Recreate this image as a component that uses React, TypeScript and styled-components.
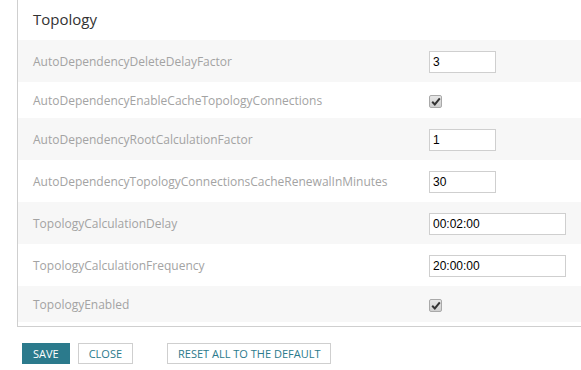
import React from "react";
import styled, { createGlobalStyle } from "styled-components";

const Global = createGlobalStyle`
  html, body { margin: 0; padding: 0; background: #fff; }
  body { font-family: "Open Sans", "Noto Sans", sans-serif; }
  * { box-sizing: border-box; }
`;

const Page = styled.div`
  width: 581px;
  height: 370px;
  overflow: hidden;
  background: #fff;
`;

const Panel = styled.section`
  margin-left: 17px;
  border-left: 1px solid #cfcfcf;
  border-bottom: 1px solid #cfcfcf;
  padding-bottom: 4px;
`;

const Title = styled.h2`
  margin: 0;
  height: 40px;
  padding: 9px 0 0 15px;
  font-size: 15px;
  font-weight: 400;
  color: #333;
  line-height: 20px;
`;

const Row = styled.div<{ $shaded: boolean; $h: number }>`
  display: grid;
  grid-template-columns: 396px 1fr;
  align-items: center;
  height: ${(p) => p.$h}px;
  padding-left: 15px;
  background: ${(p) => (p.$shaded ? "#f7f7f7" : "#fff")};
`;

const Label = styled.span`
  font-size: 12px;
  color: #a3a3a3;
  white-space: nowrap;
`;

const TextInput = styled.input<{ $wide: boolean }>`
  width: ${(p) => (p.$wide ? 137 : 67)}px;
  height: 22px;
  border: 1px solid #cfcfcf;
  background: #fff;
  padding: 0 3px;
  font-family: "Liberation Sans", Arial, sans-serif;
  font-size: 12px;
  color: #000;
  outline: none;
  margin: 0;
`;

const CheckBox = styled.span`
  display: inline-flex;
  align-items: center;
  justify-content: center;
  width: 13px;
  height: 13px;
  border: 1px solid #a9a9a9;
  border-radius: 2px;
  background: linear-gradient(#e6e6e6, #cfcfcf);
  margin-top: -2px;
`;

const Actions = styled.div`
  display: flex;
  align-items: center;
  padding: 16px 0 0 22px;
`;

const Button = styled.button<{ $primary?: boolean; $gapLeft: number }>`
  height: 21px;
  margin: 0 0 0 ${(p) => p.$gapLeft}px;
  padding: 0 10px;
  font-family: "Open Sans", "Noto Sans", sans-serif;
  font-size: 11px;
  line-height: 19px;
  text-transform: uppercase;
  cursor: pointer;
  border: 1px solid ${(p) => (p.$primary ? "#2b7a8c" : "#cfcfcf")};
  background: ${(p) => (p.$primary ? "#2b7a8c" : "#fff")};
  color: ${(p) => (p.$primary ? "#fff" : "#2b7a8c")};
`;

type Setting =
  | { name: string; kind: "text"; value: string; wide?: boolean }
  | { name: string; kind: "check" };

const settings: Setting[] = [
  { name: "AutoDependencyDeleteDelayFactor", kind: "text", value: "3" },
  { name: "AutoDependencyEnableCacheTopologyConnections", kind: "check" },
  { name: "AutoDependencyRootCalculationFactor", kind: "text", value: "1" },
  { name: "AutoDependencyTopologyConnectionsCacheRenewalInMinutes", kind: "text", value: "30" },
  { name: "TopologyCalculationDelay", kind: "text", value: "00:02:00", wide: true },
  { name: "TopologyCalculationFrequency", kind: "text", value: "20:00:00", wide: true },
  { name: "TopologyEnabled", kind: "check" },
];

const Check = () => (
  <CheckBox>
    <svg width="10" height="9" viewBox="0 0 10 9">
      <path d="M1.2 4.8 L3.8 7.4 L8.8 1.4" fill="none" stroke="#333" strokeWidth="2" />
    </svg>
  </CheckBox>
);

export default function App() {
  return (
    <Page>
      <Global />
      <Panel>
        <Title>Topology</Title>
        {settings.map((s, i) => (
          <Row key={s.name} $shaded={i % 2 === 0} $h={s.kind === "check" ? 36 : 42}>
            <Label>{s.name}</Label>
            <div>
              {s.kind === "text" ? (
                <TextInput $wide={!!s.wide} defaultValue={s.value} />
              ) : (
                <Check />
              )}
            </div>
          </Row>
        ))}
      </Panel>
      <Actions>
        <Button $primary $gapLeft={0}>Save</Button>
        <Button $gapLeft={8}>Close</Button>
        <Button $gapLeft={34}>Reset all to the default</Button>
      </Actions>
    </Page>
  );
}
